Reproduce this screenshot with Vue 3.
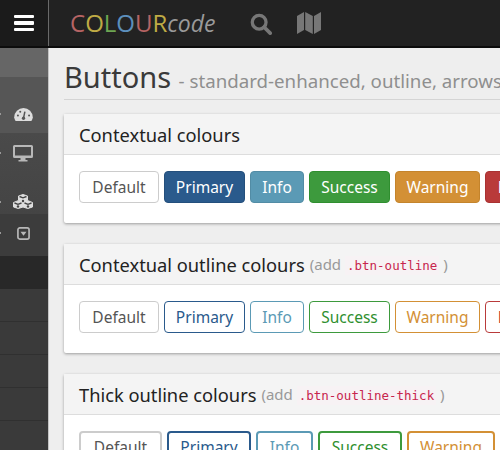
<script setup>
const groups = [
  { title: 'Contextual colours', variant: 'solid' },
  { title: 'Contextual outline colours', code: '.btn-outline', variant: 'outline' },
  { title: 'Thick outline colours', code: '.btn-outline-thick', variant: 'thick' }
]
const buttons = ['Default', 'Primary', 'Info', 'Success', 'Warning', 'Danger']
const rows = ['r1', 'r2', 'r3', 'r4', 'r5', 'r6', 'r7', 'r7', 'r7', 'r7', 'r7']
</script>

<template>
  <div class="app">
    <header class="navbar">
      <div class="burger">
        <span></span><span></span><span></span>
      </div>
      <div class="logo">
        <span class="c-red">C</span><span class="c-yellow">O</span><span class="c-green">L</span><span class="c-blue">O</span><span class="c-red">U</span><span class="c-yellow">R</span><em>code</em>
      </div>
      <svg class="nav-icon search" viewBox="0 0 24 24" width="22" height="22">
        <circle cx="10" cy="10" r="7.500" fill="none" stroke="#777777" stroke-width="3.600" />
        <path d="M15.500 15.500 L22 22" stroke="#777777" stroke-width="4" stroke-linecap="round" />
      </svg>
      <svg class="nav-icon map" viewBox="0 0 24 24" width="24" height="24">
        <path fill="#777777" d="M0 5 L7 1 V19 L0 23 Z M8.200 1 L15.800 5 V23 L8.200 19 Z M17 5 L24 1 V19 L17 23 Z" />
      </svg>
    </header>

    <div class="main">
      <aside class="sidebar">
        <div v-for="(row, i) in rows" :key="i" class="side-row" :class="row">
          <i v-if="i > 0 && i < 5" class="tick"></i>
          <svg v-if="i === 1" viewBox="0 0 20 14" width="19" height="13">
            <path fill="#dddddd" d="M10 0 A10 10 0 0 1 20 10 Q20 12 18.500 14 H1.500 Q0 12 0 10 A10 10 0 0 1 10 0 Z" />
            <path stroke="#555555" stroke-width="1.600" d="M10 11 L11.500 4" />
            <circle cx="10" cy="11" r="1.800" fill="#555555" />
            <circle cx="4" cy="8" r="1.100" fill="#555555" />
            <circle cx="6.500" cy="4" r="1.100" fill="#555555" />
            <circle cx="16" cy="8" r="1.100" fill="#555555" />
          </svg>
          <svg v-else-if="i === 2" viewBox="0 0 20 17" width="20" height="17">
            <path fill="#b8b8b8" d="M1.500 0 H18.500 Q20 0 20 1.500 V11.500 Q20 13 18.500 13 H12.500 V15 H14.500 V16.500 H5.500 V15 H7.500 V13 H1.500 Q0 13 0 11.500 V1.500 Q0 0 1.500 0 Z" />
            <rect x="2" y="2" width="16" height="8.500" fill="#484848" />
          </svg>
          <svg v-else-if="i === 3" viewBox="0 0 20 15" width="20" height="15">
            <path fill="#dddddd" stroke="#dddddd" stroke-linejoin="round" d="M10 0.500 L14.500 2 V6.500 L19.500 8.500 V13 L14.800 14.500 L10 13 L5.200 14.500 L0.500 13 V8.500 L5.500 6.500 V2 Z" />
            <path stroke="#444444" stroke-width="1.400" fill="none" d="M6.500 2.500 L10 3.800 L13.500 2.500 M1.500 9 L5 10.300 L8.500 9 M11.500 9 L15 10.300 L18.500 9" />
            <circle cx="10" cy="7" r="1.200" fill="#444444" />
            <circle cx="5" cy="12.500" r="1.200" fill="#444444" />
            <circle cx="15" cy="12.500" r="1.200" fill="#444444" />
          </svg>
          <svg v-else-if="i === 4" viewBox="0 0 14 14" width="13" height="13">
            <rect x="1" y="1" width="12" height="12" rx="2" fill="none" stroke="#b8b8b8" stroke-width="1.800" />
            <path fill="#b8b8b8" d="M3.800 5 H10.200 L7 9.500 Z" />
          </svg>
        </div>
      </aside>

      <section class="content">
        <h1 class="page-title">Buttons <small>- standard-enhanced, outline, arrows</small></h1>

        <div v-for="group in groups" :key="group.title" class="panel">
          <div class="panel-heading">
            <h3>{{ group.title }}</h3>
            <span v-if="group.code" class="note">(add <code>{{ group.code }}</code> )</span>
          </div>
          <div class="panel-body">
            <button
              v-for="b in buttons"
              :key="b"
              class="btn"
              :class="[group.variant, b.toLowerCase()]"
            >{{ b }}</button>
          </div>
        </div>
      </section>
    </div>
  </div>
</template>

<style scoped>
.app {
  width: 500px;
  height: 450px;
  overflow: hidden;
  display: flex;
  flex-direction: column;
  font-family: "Noto Sans", "Open Sans", sans-serif;
  background: #eeeeee;
}

.navbar {
  height: 46px;
  flex: none;
  display: flex;
  align-items: center;
  background: #222222;
  border-bottom: 2px solid #0c0c0c;
}

.burger {
  width: 48px;
  height: 46px;
  flex: none;
  display: flex;
  flex-direction: column;
  justify-content: center;
  align-items: center;
  gap: 3.300px;
  background: #1b1b1b;
  border-right: 1px solid #6a6a6a;
}

.burger span {
  width: 20px;
  height: 3.400px;
  border-radius: 1px;
  background: #ffffff;
}

.logo {
  margin-left: 21px;
  width: 180px;
  flex: none;
  font-family: "Open Sans", sans-serif;
  font-size: 24px;
  line-height: 46px;
  white-space: nowrap;
}

.logo em {
  color: #9a9a9a;
  font-size: 23px;
}

.c-red { color: #b66464; }
.c-yellow { color: #bfab45; }
.c-green { color: #6ea552; }
.c-blue { color: #5c8fbc; }

.nav-icon.search {
  margin-top: 2px;
}

.nav-icon.map {
  margin-left: 25px;
}

.main {
  flex: 1;
  min-height: 0;
  display: flex;
}

.sidebar {
  width: 48px;
  flex: none;
  display: flex;
  flex-direction: column;
  background: #3a3a3a;
  border-right: 1px solid #c4c4c4;
}

.side-row {
  position: relative;
  flex: none;
  box-sizing: border-box;
  display: flex;
  justify-content: center;
  align-items: center;
  padding-right: 2px;
}

.tick {
  position: absolute;
  left: 0;
  width: 1px;
  height: 2px;
  background: #999999;
}

.r1 { height: 30px; background: #666666; border-bottom: 1px solid #565656; }
.r2 { height: 55px; background: #565656; padding-top: 17px; }
.r3 { height: 40px; background: linear-gradient(#4a4a4a, #474747); }
.r4 { height: 41px; background: linear-gradient(#474747, #444444); padding-top: 16px; }
.r5 { height: 42px; background: #3c3c3c; padding-bottom: 4px; }
.r6 { height: 33px; background: #282828; }
.r7 { height: 33px; background: #3a3a3a; border-bottom: 1px solid #303030; }

.content {
  flex: 1;
  min-width: 0;
  padding-left: 15px;
}

.page-title {
  margin: 0 0 14px;
  width: 520px;
  height: 52px;
  box-sizing: border-box;
  padding-top: 10px;
  font-size: 29px;
  line-height: 38px;
  font-weight: 400;
  color: #3a3a3a;
  border-bottom: 1px solid #d4d4d4;
  white-space: nowrap;
}

.page-title small {
  font-size: 18.700px;
  color: #8f8f8f;
}

.panel {
  width: 560px;
  height: 109px;
  margin-bottom: 21px;
  background: #ffffff;
  box-shadow: 0 1px 3px rgba(0, 0, 0, 0.35);
  border-radius: 2px;
}

.panel-heading {
  height: 41px;
  box-sizing: border-box;
  display: flex;
  align-items: center;
  padding-left: 15px;
  background: #f4f4f4;
  border-bottom: 1px solid #dddddd;
  white-space: nowrap;
}

.panel-heading h3 {
  margin: 0;
  font-size: 18.300px;
  font-weight: 400;
  color: #222222;
}

.note {
  margin-left: 5px;
  font-size: 15px;
  color: #999999;
}

.note code {
  padding: 2px 2px;
  font-family: "DejaVu Sans Mono", monospace;
  font-size: 12.500px;
  color: #c7254e;
  background: #f7f2f4;
}

.panel-body {
  display: flex;
  gap: 5px;
  padding: 16px 15px;
}

.btn {
  flex: none;
  height: 32px;
  padding: 0;
  box-sizing: border-box;
  font-family: inherit;
  font-size: 15.500px;
  border: 1px solid;
  border-radius: 4px;
  background: #ffffff;
}

.default { width: 80px; }
.primary { width: 81px; }
.info { width: 54px; }
.success { width: 81px; }
.warning { width: 85px; }
.danger { width: 80px; }

.solid.default { color: #555555; border-color: #cccccc; }
.solid.primary { color: #ffffff; background: #2a5a8c; border-color: #244f7c; }
.solid.info { color: #ffffff; background: #5b9ab5; border-color: #528ca5; }
.solid.success { color: #ffffff; background: #3d9a3d; border-color: #2f8f2f; }
.solid.warning { color: #ffffff; background: #d39035; border-color: #c4842c; }
.solid.danger { color: #ffffff; background: #b93a3a; border-color: #a93232; }

.outline.default, .thick.default { color: #555555; border-color: #cccccc; }
.outline.primary, .thick.primary { color: #2a5a8c; border-color: #2a5a8c; }
.outline.info, .thick.info { color: #5b9ab5; border-color: #5b9ab5; }
.outline.success, .thick.success { color: #2f8f2f; border-color: #3d9a3d; }
.outline.warning, .thick.warning { color: #d39035; border-color: #d39035; }
.outline.danger, .thick.danger { color: #b93a3a; border-color: #b93a3a; }

.thick { border-width: 2px; }
.thick.default { width: 83px; }
.thick.primary { width: 84px; }
.thick.info { width: 57px; }
.thick.success { width: 84px; }
.thick.warning { width: 88px; }
</style>

<style>
html, body {
  margin: 0;
  overflow: hidden;
}
</style>
